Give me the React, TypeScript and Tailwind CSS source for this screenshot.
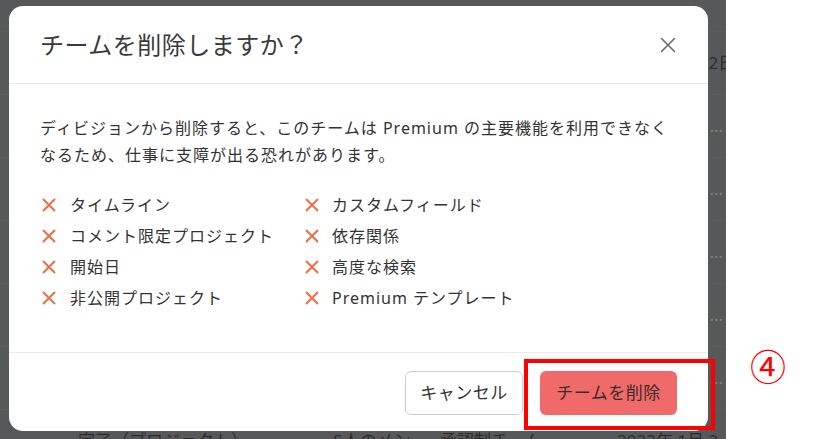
import React from 'react';

const features: [string, string][] = [
  ['タイムライン', 'カスタムフィールド'],
  ['コメント限定プロジェクト', '依存関係'],
  ['開始日', '高度な検索'],
  ['非公開プロジェクト', 'Premium テンプレート'],
];

// Rows of the table that sits behind the dark overlay
const bgRows = [
  { h: 'h-[32px]', cells: ['', '', '', ''] },
  { h: 'h-[63px]', cells: ['', '', '', '2022年 1月 2日'] },
  { h: 'h-[63px]', cells: ['', '', '', '…'] },
  { h: 'h-[63px]', cells: ['', '', '', '…'] },
  { h: 'h-[63px]', cells: ['', '', '', '…'] },
  { h: 'h-[63px]', cells: ['', '', '', '…'] },
  { h: 'h-[63px]', cells: ['', '', '', '…'] },
  { h: 'h-[63px]', cells: ['完了（プロジェクト）', '5人のメン…', '承認制チーム', '2022年 1月 2'] },
];

function CrossIcon() {
  return (
    <svg width="14" height="14" viewBox="0 0 14 14" className="shrink-0">
      <path d="M1.5 1.5 L12.5 12.5 M12.5 1.5 L1.5 12.5" stroke="#f06b43" strokeWidth="1.9" strokeLinecap="round" />
    </svg>
  );
}

function CloseIcon() {
  return (
    <svg width="16" height="16" viewBox="0 0 16 16">
      <path d="M1.5 1.5 L14.5 14.5 M14.5 1.5 L1.5 14.5" stroke="#6b6b6b" strokeWidth="1.6" strokeLinecap="round" />
    </svg>
  );
}

export default function App() {
  return (
    <div
      className="relative flex w-[835px] h-[439px] overflow-hidden bg-white"
      style={{ fontFamily: '"Noto Sans", "Noto Sans CJK JP", sans-serif' }}
    >
      {/* Dimmed page behind the modal */}
      <div className="w-[726px] h-full bg-[#57585a] flex flex-col shrink-0 overflow-hidden">
        {bgRows.map((row, i) => (
          <div key={i} className={`${row.h} shrink-0 flex items-center border-b border-[#5d5c5b] text-[17px] text-[#2c2c2d]`}>
            <span className="w-[333px] shrink-0 pl-[78px] whitespace-nowrap">{row.cells[0]}</span>
            <span className="w-[107px] shrink-0 whitespace-nowrap">{row.cells[1]}</span>
            <span className="w-[177px] shrink-0 whitespace-nowrap">{row.cells[2]}</span>
            <span
              className={`flex-1 whitespace-nowrap ${
                i === 1 || i === 7 ? 'text-left' : 'pr-[3px] text-right text-[#808183]'
              }`}
            >
              {row.cells[3]}
            </span>
          </div>
        ))}
      </div>

      {/* Modal */}
      <div className="absolute left-[9px] top-[6px] w-[699px] h-[425px] bg-white rounded-[14px] flex flex-col text-[#333333]">
        <div className="h-[78px] shrink-0 px-[31px] flex items-center justify-between border-b border-[#e9e9e9]">
          <h2 className="text-[24px] tracking-[0.5px] text-[#3a3a3a]">チームを削除しますか？</h2>
          <button className="w-[24px] h-[24px] flex items-center justify-center mr-[-3px]">
            <CloseIcon />
          </button>
        </div>

        <div className="flex-1 px-[31px] pt-[31px]">
          <p className="text-[16px] leading-[27px] tracking-[1px] whitespace-nowrap">
            ディビジョンから削除すると、このチームは Premium の主要機能を利用できなく
            <br />
            なるため、仕事に支障が出る恐れがあります。
          </p>
          <div className="mt-[20px] grid grid-cols-[265px_1fr]">
            {features.map(([a, b]) => (
              <React.Fragment key={a}>
                <div className="h-[31px] flex items-center gap-[14px] pl-[2px] text-[16px] tracking-[1px]">
                  <CrossIcon />
                  <span>{a}</span>
                </div>
                <div className="h-[31px] flex items-center gap-[13px] text-[16px] tracking-[1px]">
                  <CrossIcon />
                  <span>{b}</span>
                </div>
              </React.Fragment>
            ))}
          </div>
        </div>

        <div className="h-[79px] shrink-0 border-t border-[#efe9e9] flex items-center justify-end gap-[17px] pr-[31px] pt-[1px]">
          <button className="w-[118px] h-[44px] rounded-[6px] border border-[#cfcfcf] bg-white text-[17px] text-[#333333] tracking-[0.5px]">
            キャンセル
          </button>
          <button className="w-[137px] h-[44px] rounded-[6px] bg-[#f06a6a] text-[17px] tracking-[0.5px]">
            <span className="text-[#3a2a2a]">チームを削除</span>
          </button>
        </div>
      </div>

      {/* Annotation */}
      <div className="absolute left-[524px] top-[359px] w-[191px] h-[71px] border-[4px] border-[#ff0000]" />
      <div className="absolute left-[750px] top-[344px] text-[36px] leading-[48px] text-[#ff0000]">④</div>
    </div>
  );
}
